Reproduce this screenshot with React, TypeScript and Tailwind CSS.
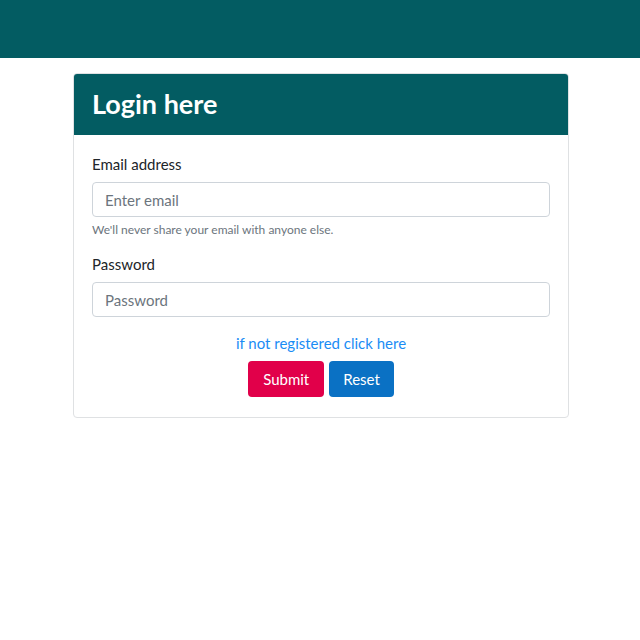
const App = () => {
  return (
    <div className="min-h-[640px] bg-white font-['Lato','Noto_Sans',sans-serif] text-[#212529]">
      <div className="h-[58px] bg-[#035c62]" />
      <div className="pt-[15px] pl-[73px]">
        <div className="w-[496px] rounded border border-[#dfe1e3] overflow-hidden">
          <div className="bg-[#035c62] h-[61px] px-[18px] flex items-center">
            <h1 className="text-white text-[27px] font-bold">Login here</h1>
          </div>
          <form className="px-[18px] pt-[18px] pb-[20px]">
            <label className="block text-[15px] leading-[22px] mb-[7px]">Email address</label>
            <input
              type="email"
              placeholder="Enter email"
              className="block w-full h-[35px] border border-[#ced4da] rounded px-3 text-[15px] placeholder:text-[#6c757d] outline-none"
            />
            <p className="text-[12px] leading-[18px] text-[#6c757d] mt-[4px]">We&apos;ll never share your email with anyone else.</p>
            <label className="block text-[15px] leading-[22px] mt-[14px] mb-[7px]">Password</label>
            <input
              type="password"
              placeholder="Password"
              className="block w-full h-[35px] border border-[#ced4da] rounded px-3 text-[15px] placeholder:text-[#6c757d] outline-none"
            />
            <div className="text-center mt-[15px] leading-[22px]">
              <a href="#" className="text-[15px] text-[#1a8cf5]">if not registered click here</a>
            </div>
            <div className="flex justify-center gap-[5px] mt-[7px]">
              <button type="button" className="h-[36px] px-[15px] rounded bg-[#e1004a] text-white text-[15px]">Submit</button>
              <button type="button" className="h-[36px] px-[14px] rounded bg-[#0a71c4] text-white text-[15px]">Reset</button>
            </div>
          </form>
        </div>
      </div>
    </div>
  );
};

export default App;
